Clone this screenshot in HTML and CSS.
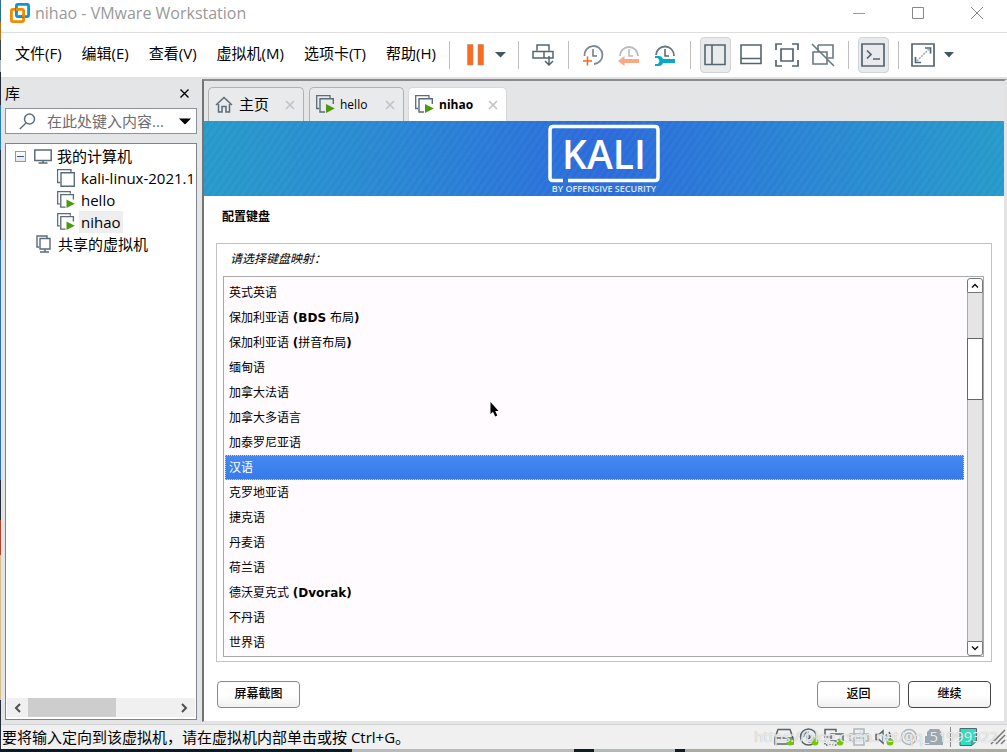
FILE: index.html
```html
<!DOCTYPE html>
<html lang="zh-CN">
<head>
<meta charset="utf-8">
<title>nihao - VMware Workstation</title>
<link rel="stylesheet" href="styles.css">
</head>
<body>
<svg class="defs" aria-hidden="true">
  <symbol id="vm" viewBox="0 0 18 18"><path d="M3 13.500H.5V.5H14V3" fill="none" stroke="#5b6b78" stroke-width="1.300"/><path d="M4 3.800H17.300V17.200H4Z" fill="#fff" stroke="#5b6b78" stroke-width="1.400"/></symbol>
  <symbol id="vm-on" viewBox="0 0 19 19"><path d="M3 13.500H.7V.7H14V3" fill="none" stroke="#5b6b78" stroke-width="1.300"/><path d="M9 17H4V3.800H17.300V9" fill="none" stroke="#5b6b78" stroke-width="1.400"/><path d="M10 9 18.800 13.500 10 18Z" fill="#4a9a0c"/></symbol>
  <symbol id="close" viewBox="0 0 10 10"><path d="M1 1 9 9M9 1 1 9" fill="none" stroke="currentColor" stroke-width="1.700"/></symbol>
  <symbol id="clock" viewBox="0 0 22 22"><path d="M11 5V12H15" fill="none" stroke="currentColor" stroke-width="1.500"/></symbol>
</svg>
<div class="desktop">
<div class="window">
  <header class="titlebar">
    <svg class="logo" width="20" height="20" viewBox="0 0 20 20"><rect x="6.400" y="1.400" width="12.200" height="12.200" rx="1.500" fill="none" stroke="#0c95d3" stroke-width="2.800"/><rect x="1.400" y="6.400" width="12.200" height="12.200" rx="1.500" fill="none" stroke="#f38b00" stroke-width="2.800"/><path d="M6.400 10V5M9 13.600h5" stroke="#0c95d3" stroke-width="2.800"/><path d="M6 6.400h3M13.600 11v3" stroke="#f38b00" stroke-width="2.800"/></svg>
    <h1 class="window-title">nihao - VMware Workstation</h1>
    <div class="window-buttons">
      <button class="window-button" aria-label="最小化"><svg width="12" height="12"><path d="M0 6.500H12" stroke="#999"/></svg></button>
      <button class="window-button" aria-label="最大化"><svg width="12" height="12"><path d="M.5.5H11.500V11.500H.5Z" fill="none" stroke="#888"/></svg></button>
      <button class="window-button" aria-label="关闭"><svg width="12" height="12"><path d="M0 0 12 12M12 0 0 12" stroke="#888"/></svg></button>
    </div>
  </header>

  <div class="menubar">
    <nav class="menu">
      <button class="menu-item">文件(F)</button><button class="menu-item">编辑(E)</button><button class="menu-item">查看(V)</button><button class="menu-item">虚拟机(M)</button><button class="menu-item">选项卡(T)</button><button class="menu-item">帮助(H)</button>
    </nav>
    <div class="toolbar">
      <span class="separator"></span>
      <button class="tool tool-split" aria-label="挂起"><svg width="18" height="22"><path d="M.5.5h5.500v20.500h-5.500zM11 .5h5.500v20.500h-5.500z" fill="#fb6b1d" stroke="#b98a72" stroke-width=".6"/></svg><svg width="11" height="6"><path d="M0 0H11L5.500 5.500Z" fill="#405766"/></svg></button>
      <span class="separator"></span>
      <button class="tool" aria-label="发送按键"><svg width="22" height="22" viewBox="0 0 22 22" fill="none" stroke="#54656f" stroke-width="1.500"><path d="M5 6.500V1H17V6.500M1 7.500H21V14H1ZM12 7.500V14M17 12V20M13 17l4 4 4-4"/></svg></button>
      <span class="separator"></span>
      <button class="tool" aria-label="拍摄快照"><svg width="22" height="22" viewBox="0 0 22 22" fill="none" color="#687782"><path d="M2.500 12A9 9 0 1 1 12 20" stroke="#7c8993" stroke-width="1.800"/><use href="#clock"/><path d="M5.500 12.500v9M1 17h9" stroke="#f26a2a" stroke-width="1.600"/></svg></button>
      <button class="tool" aria-label="恢复快照"><svg width="22" height="22" viewBox="0 0 22 22" fill="none" color="#b4bbc1"><path d="M2 12A9 9 0 1 1 20 12" stroke="#b4bbc1" stroke-width="1.800"/><use href="#clock"/><path d="M0 17 6.500 12V15H21V19H6.500V22Z" fill="#fba984"/></svg></button>
      <button class="tool" aria-label="管理快照"><svg width="22" height="22" viewBox="0 0 22 22" fill="none" color="#54656f"><path d="M2 11A9 9 0 1 1 20 12" stroke="#687782" stroke-width="1.800"/><use href="#clock"/><path d="M1 12h4q3 0 4 3h12v4H9q-1 3-4 3H1v-2h3l1.500-3L4 14H1Z" fill="#05aacb"/></svg></button>
      <span class="separator"></span>
      <button class="tool tool-active" aria-label="显示库"><svg width="22" height="22" fill="none" stroke="#54656f" stroke-width="1.600"><path d="M1 1H21V20.500H1ZM8 1V20.500"/></svg></button>
      <button class="tool" aria-label="缩略图栏"><svg width="22" height="22" fill="none" stroke="#54656f" stroke-width="1.600"><path d="M1 1H21V19.500H1ZM1 14.500H21"/></svg></button>
      <button class="tool" aria-label="全屏"><svg width="24" height="24" fill="none" stroke="#54656f" stroke-width="1.700"><path d="M1 7V1H7M17 1h6v6M23 17v6h-6M7 23H1v-6M6 6H18V18H6Z"/></svg></button>
      <button class="tool" aria-label="Unity 模式"><svg width="24" height="24" fill="none" stroke="#6a7882" stroke-width="1.600"><path d="M7 2H22V15H17M7 9V2M2 9H16V21H2ZM1 1 23 23"/></svg></button>
      <span class="separator"></span>
      <button class="tool tool-active" aria-label="控制台视图"><svg width="24" height="24" fill="none" stroke="#54656f" stroke-width="1.700"><path d="M1 1H23V23H1Z"/><path d="M6 7.500 10 11.500 6 15.500M12 16h7"/></svg></button>
      <span class="separator"></span>
      <button class="tool" aria-label="拉伸客户机"><svg width="24" height="24" fill="none" stroke="#54656f" stroke-width="1.700"><path d="M1 1H23V23H1Z"/><path d="M14 5h5.500v5.500M4.500 14v5.500H10"/><path d="M6 18 18 6" stroke="#a5adb4" stroke-dasharray="2 1"/></svg></button>
      <button class="tool tool-caret" aria-label="更多"><svg width="10" height="6"><path d="M0 0H10L5 5.500Z" fill="#405766"/></svg></button>
    </div>
  </div>

  <div class="workspace">
    <aside class="library">
      <div class="library-head"><h2 class="library-title">库</h2><button class="plain" aria-label="关闭库"><svg width="9" height="9"><path d="M.5.5 8.500 8.500M8.500.5.5 8.500" stroke="#000" stroke-width="1.400"/></svg></button></div>
      <div class="search">
        <svg width="17" height="17" fill="none" stroke="#5f6f7b" stroke-width="1.500"><circle cx="10.500" cy="6" r="5"/><path d="M7 10 .8 16"/></svg>
        <input class="search-input" type="text" aria-label="搜索" placeholder="在此处键入内容...">
        <button class="plain" aria-label="搜索选项"><svg width="12" height="7"><path d="M0 .5H12L6 6.500Z"/></svg></button>
      </div>
      <div class="tree-box">
        <ul class="tree">
          <li class="tree-row"><button class="expander" aria-label="折叠"></button><svg width="18" height="15" fill="none" stroke="#5b6b78" stroke-width="1.500"><path d="M.8 1H17.200V11.500H.8ZM9 11.500V14M4.500 14h9"/></svg><span class="tree-name">我的计算机</span></li>
          <li class="tree-row tree-child"><svg width="18" height="18"><use href="#vm"/></svg><span class="tree-name">kali-linux-2021.1</span></li>
          <li class="tree-row tree-child"><svg width="18" height="18"><use href="#vm-on"/></svg><span class="tree-name">hello</span></li>
          <li class="tree-row tree-child"><svg width="18" height="18"><use href="#vm-on"/></svg><span class="tree-name tree-selected">nihao</span></li>
          <li class="tree-row tree-shared"><svg width="18" height="18" fill="none" stroke="#5b6b78" stroke-width="1.400"><path d="M4 12H2V1H12V3M5 3.500H15V14H5ZM10 14v3M5 17h9"/></svg><span class="tree-name">共享的虚拟机</span></li>
        </ul>
        <div class="hscroll">
          <button class="plain hscroll-arrow" aria-label="向左"><svg width="7" height="10"><path d="M6 1 2 5 6 9" fill="none" stroke="#505050" stroke-width="2"/></svg></button>
          <div class="hscroll-track"><div class="hscroll-thumb"></div></div>
          <button class="plain hscroll-arrow" aria-label="向右"><svg width="7" height="10"><path d="M1 1 5 5 1 9" fill="none" stroke="#505050" stroke-width="2"/></svg></button>
        </div>
      </div>
    </aside>

    <main class="console">
      <div class="tabs">
        <div class="tab tab-home"><svg width="18" height="17" fill="none" stroke="#5b6b78" stroke-width="1.500"><path d="M1 9 9 1.500 17 9M3.500 8V16H7V10.500h4V16h3.500V8"/></svg><span class="tab-name tab-name-home">主页</span><button class="plain tab-close" aria-label="关闭主页"><svg width="10" height="10"><use href="#close"/></svg></button></div>
        <div class="tab"><svg width="19" height="19"><use href="#vm-on"/></svg><span class="tab-name">hello</span><button class="plain tab-close" aria-label="关闭 hello"><svg width="10" height="10"><use href="#close"/></svg></button></div>
        <div class="tab tab-current"><svg width="19" height="19"><use href="#vm-on"/></svg><span class="tab-name">nihao</span><button class="plain tab-close" aria-label="关闭 nihao"><svg width="10" height="10"><use href="#close"/></svg></button></div>
      </div>
      <section class="guest">
        <div class="banner">
          <svg width="114" height="72" viewBox="0 0 114 72"><path d="M16 58.500H6Q3 58.500 3 55.500V8Q3 4.500 6 4.500H108Q111 4.500 111 8V55.500Q111 58.500 108 58.500H21" fill="none" stroke="#fff" stroke-width="3.500"/><text class="kali-name" x="57" y="47" text-anchor="middle">KALI</text><text class="kali-tag" x="57" y="70" text-anchor="middle">BY OFFENSIVE SECURITY</text></svg>
        </div>
        <div class="installer">
          <h2 class="installer-title">配置键盘</h2>
          <div class="panel">
            <p class="prompt" id="prompt">请选择键盘映射：</p>
            <div class="list">
              <div class="options" role="radiogroup" aria-labelledby="prompt">
                <label class="option"><input type="radio" name="keymap">英式英语</label>
                <label class="option"><input type="radio" name="keymap">保加利亚语 <b>(BDS</b> 布局<b>)</b></label>
                <label class="option"><input type="radio" name="keymap">保加利亚语 <b>(</b>拼音布局<b>)</b></label>
                <label class="option"><input type="radio" name="keymap">缅甸语</label>
                <label class="option"><input type="radio" name="keymap">加拿大法语</label>
                <label class="option"><input type="radio" name="keymap">加拿大多语言</label>
                <label class="option"><input type="radio" name="keymap">加泰罗尼亚语</label>
                <label class="option option-selected"><input type="radio" name="keymap" checked>汉语</label>
                <label class="option"><input type="radio" name="keymap">克罗地亚语</label>
                <label class="option"><input type="radio" name="keymap">捷克语</label>
                <label class="option"><input type="radio" name="keymap">丹麦语</label>
                <label class="option"><input type="radio" name="keymap">荷兰语</label>
                <label class="option"><input type="radio" name="keymap">德沃夏克式 <b>(Dvorak)</b></label>
                <label class="option"><input type="radio" name="keymap">不丹语</label>
                <label class="option"><input type="radio" name="keymap">世界语</label>
              </div>
              <div class="vscroll">
                <button class="vscroll-button vscroll-up" aria-label="向上"><svg width="8" height="5"><path d="M1 4.500 4 1.500 7 4.500" fill="none" stroke="#111" stroke-width="1.500"/></svg></button>
                <div class="vscroll-track"><div class="vscroll-thumb"></div></div>
                <button class="vscroll-button vscroll-down" aria-label="向下"><svg width="8" height="5"><path d="M1 .5 4 3.500 7 .5" fill="none" stroke="#111" stroke-width="1.500"/></svg></button>
              </div>
            </div>
          </div>
          <div class="actions">
            <button class="action action-left">屏幕截图</button>
            <button class="action">返回</button>
            <button class="action action-default">继续</button>
          </div>
        </div>
        <svg class="pointer" width="10" height="16" viewBox="0 0 10 16"><path d="M.5 0V12L3 9.800 5.200 14.500 7.300 13.500 5.200 9H8.500Z"/></svg>
      </section>
    </main>
  </div>

  <footer class="statusbar">
    <p class="status-text">要将输入定向到该虚拟机，请在虚拟机内部单击或按 Ctrl+G。</p>
    <div class="devices">
      <svg width="20" height="18" fill="none" stroke="#54656f" stroke-width="1.500"><path d="M4 1.500H16L19 10V16H1V10ZM1 10H19"/><circle cx="16" cy="14" r="3.500" fill="#76c510" stroke="none"/></svg>
      <svg width="20" height="18" fill="none" stroke="#54656f" stroke-width="1.500"><circle cx="9.500" cy="9" r="8"/><circle cx="9.500" cy="9" r="1.500"/><path d="M4.500 9a5 5 0 0 1 5-5M14.500 9a5 5 0 0 1-5 5"/><circle cx="16" cy="14" r="3.500" fill="#76c510" stroke="none"/></svg>
      <svg width="20" height="18" fill="none" stroke="#54656f" stroke-width="1.500"><path d="M6 9H1V1.500H12V4M7 6H19V13H7Z"/><path d="M1 12v5H14" stroke-dasharray="1.500 1.500"/><circle cx="16" cy="14" r="3.500" fill="#76c510" stroke="none"/></svg>
      <svg width="20" height="18" fill="none" stroke="#adb5bb" stroke-width="1.500"><path d="M5 6V1H15V6M5 13H1V6H19V13H15M5 10H15V17H5Z"/></svg>
      <svg width="20" height="18" fill="none" stroke="#54656f" stroke-width="1.500"><path d="M2 6.500H5L9 3V15L5 11.500H2Z"/><path d="M12 6.500q2 2.500 0 5M15 4q3 5 0 9"/><circle cx="16" cy="14" r="3.500" fill="#76c510" stroke="none"/></svg>
      <svg width="20" height="18" fill="none" stroke="#adb5bb" stroke-width="1.500"><circle cx="10" cy="9" r="7.500"/><circle cx="10" cy="9" r="4"/><path d="M10 7v4"/></svg>
      <svg width="20" height="18" fill="#9aa8b2"><path d="M1 8V17H19V8ZM3 8V4L6 1H15L17 4V8Z"/></svg>
      <span class="status-separator"></span>
      <svg width="20" height="18"><path d="M2 .5H18.500V13L14 17.500H2Z" fill="#2ce0c2" stroke="#54656f"/><path d="M14 17V13H18" fill="none" stroke="#54656f"/></svg>
      <svg class="grip" width="16" height="16" fill="none" stroke="#777" stroke-width="1.500"><path d="M1 15 15 1M6 15 15 6M11 15l4-4"/></svg>
    </div>
    <span class="watermark">https://blog.csdn.net/qq_51999322</span>
  </footer>
</div>
</div>
</body>
</html>
```
FILE: styles.css
```css
* { box-sizing: border-box; }
body { margin: 0; font: 15px/22px "Open Sans", "Noto Sans CJK SC", sans-serif; color: #000; }
h1, h2, p, ul { margin: 0; padding: 0; font-weight: 400; }
ul { list-style: none; }
svg { flex: none; display: block; }
button { font: inherit; color: inherit; border: 0; background: none; padding: 0; margin: 0; }
.defs { position: absolute; width: 0; height: 0; }
.plain { display: flex; align-items: center; justify-content: center; }

.desktop {
  min-height: 100vh; display: flex; padding: 0 0 3px 1px;
  background:
    linear-gradient(90deg, #0b1a25 0 35%, #b9bbba 35% 57%, #101c22 57% 59%, #b5b8b8 59% 67%, #101c22 67% 68%, #a9aaa4 68%) bottom / 100% 3px no-repeat,
    linear-gradient(#27718f 0 22px, #b87224 22px 40px, #3a4552 40px 60px, #b5bac0 60px 72px, #252d3b 72px 105px, #2b7fb8 105px 150px, #253350 150px 240px, #2f70ad 240px 480px, #252d3b 480px 520px, #b8402e 520px 555px, #d6c184 555px 700px, #252d3b 700px);
}
.window { flex: 1; min-width: 0; display: flex; flex-direction: column; background: #fff; }

.titlebar { display: flex; align-items: center; height: 33px; padding: 0 24px 6px 9px; border-bottom: 1px solid #dedede; }
.window-title { font-size: 16px; line-height: 22px; color: #999; margin-left: 5px; }
.window-buttons { display: flex; gap: 47px; margin-left: auto; }
.window-button { display: flex; }

.menubar { display: flex; align-items: center; height: 44px; }
.menu { display: flex; gap: 20px; padding: 0 0 4px 14px; }
.menu-item { white-space: nowrap; }
.toolbar { display: flex; align-items: center; gap: 5px; margin-left: 9px; }
.separator { width: 1px; height: 28px; margin: 0 4px; background: #bfbfbf; }
.tool { width: 31px; height: 36px; display: flex; align-items: center; justify-content: center; border: 1px solid transparent; border-radius: 4px; }
.tool-active { background: #e9eaec; border-color: #d2d3d4; }
.tool-split { width: 50px; gap: 10px; padding-left: 5px; }
.tool-caret { width: 10px; }

.workspace { flex: 1; display: flex; background: #e4e5e7; border-top: 2px solid #e2e2e2; }
.library { width: 201px; flex: none; display: flex; flex-direction: column; padding: 2px 5px 4px 4px; }
.library-head { display: flex; align-items: center; justify-content: space-between; height: 27px; padding: 0 8px 3px 0; }
.library-title { font-size: 15px; }
.search { display: flex; align-items: center; height: 26px; padding: 0 5px 0 13px; background: #fff; border: 1px solid #8c9099; }
.search-input { flex: 1; min-width: 0; border: 0; padding: 0; margin-left: 11px; font: inherit; background: none; outline: 0; }
.search-input::placeholder { color: #6d6d6d; opacity: 1; }
.tree-box { flex: 1; display: flex; flex-direction: column; justify-content: space-between; margin-top: 9px; padding: 1px 1px 2px; background: #fff; border: 1px solid #7e838c; }
.tree-row { display: flex; align-items: center; height: 22px; padding-left: 8px; white-space: nowrap; }
.tree-child { padding-left: 50px; }
.tree-shared { padding-left: 28px; }
.tree-name { margin-left: 3px; padding: 0 2px; }
.tree-child .tree-name { margin-left: 4px; }
.tree-selected { background: #eee; }
.expander { width: 11px; height: 11px; margin-right: 8px; border: 1px solid #999; background: linear-gradient(#3856a5, #3856a5) center / 7px 1px no-repeat, linear-gradient(#fff, #e6e6e6); }
.hscroll { display: flex; height: 19px; background: #f0f0f0; }
.hscroll-arrow { width: 21px; }
.hscroll-track { flex: 1; }
.hscroll-thumb { width: 60%; height: 100%; background: #cdcdcd; }

.console { flex: 1; min-width: 0; display: flex; flex-direction: column; border: 2px solid #e3e3e3; border-top-color: #8b8b8b; border-left-color: #747474; border-right-width: 3px; border-bottom-width: 1px; margin-bottom: 2px; }
.tabs { display: flex; gap: 5px; padding: 6px 3px 0 4px; }
.tab { display: flex; align-items: center; height: 34px; width: 95px; padding: 0 8px 0 6px; font-size: 13px; border: 1px solid #b0b1b3; border-bottom: 0; border-radius: 5px 5px 0 0; background: #e9eaec; }
.tab-home { width: 96px; }
.tab-current { width: 99px; margin-left: -1px; background: #fff; font-weight: 700; border-color: #d8d8d8; }
.tab-name { margin-left: 5px; font-size: 12px; }
.tab-name-home { font-size: 15px; margin-left: 6px; padding-bottom: 2px; }
.tab-close { margin-left: auto; color: #c3c4c6; }

.guest { position: relative; flex: 1; display: flex; flex-direction: column; background: #fff; font: 12px/25px "DejaVu Sans", "Noto Sans CJK SC", sans-serif; }
.banner {
  display: flex; justify-content: center; height: 75px; padding-top: 1px;
  background:
    repeating-linear-gradient(125deg, rgba(255,255,255,.025) 0 3px, rgba(0,30,90,.015) 3px 6px),
    linear-gradient(90deg, #279bcb, #2a8bd2 20%, #2b75da 42%, #2d6bdb 50%, #2b75da 58%, #2a8bd2 80%, #279bcb);
}
.kali-name { font: 600 39px "Open Sans", sans-serif; fill: #fff; }
.kali-tag { font: 600 9px "Open Sans", sans-serif; fill: #dce9fb; }
.installer { flex: 1; display: flex; flex-direction: column; padding: 9px 12px 13px; }
.installer-title { font-size: 12px; font-weight: 700; line-height: 25px; padding-left: 6px; }
.panel { flex: 1; margin-top: 13px; padding: 3px 7px 4px 6px; border: 1px solid #c2c2c2; display: flex; flex-direction: column; }
.prompt { font-style: italic; padding: 0 7px 4px; }
.list { flex: 1; display: flex; justify-content: space-between; border: 1px solid #aaa; background: #fffbff; }
.options { flex: 1; padding: 3px 3px 0 1px; }
.option { display: block; height: 25px; line-height: 27px; padding: 0 4px; }
.option input { position: absolute; opacity: 0; margin: 0; }
.option-selected { padding: 0 3px; line-height: 25px; color: #fff; background: linear-gradient(#4788f1, #357bea); border: 1px dotted #b5d0fa; }
.vscroll { width: 16px; display: flex; flex-direction: column; padding-top: 1px; background: #fff; }
.vscroll-button { height: 15px; display: flex; align-items: center; justify-content: center; border: 1px solid #777; background: #fff; }
.vscroll-up { border-radius: 3px 3px 0 0; }
.vscroll-down { border-radius: 0 0 3px 3px; }
.vscroll-track { flex: 1; padding-top: 45px; background: #e5e5e5; border: solid #aaa; border-width: 0 1px; margin: 0; }
.vscroll-thumb { height: 62px; margin: 0 -1px; border: 1px solid #666; background: #fff; }
.actions { display: flex; gap: 8px; margin-top: 19px; padding: 0 1px; }
.action { width: 83px; height: 27px; border: 1px solid #888; border-radius: 4px; background: linear-gradient(#fff 50%, #f2f0f2); font-weight: 500; }
.action-left { margin-right: auto; }
.action-default { border-color: #444; }
.pointer { position: absolute; left: 286px; top: 281px; }

.statusbar { position: relative; display: flex; align-items: center; justify-content: space-between; height: 25px; padding: 0 1px 1px; background: #f0f0f0; border-top: 1px solid #d2d2d2; }
.status-text { white-space: nowrap; }
.devices { display: flex; align-items: center; gap: 5px; }
.status-separator { width: 1px; height: 20px; margin: 0 2px 0 1px; background: #888; }
.grip { margin-left: 7px; }
.watermark { position: absolute; right: 9px; top: 0; font-size: 15px; color: rgba(255,255,255,.8); text-shadow: 0 0 1px #999; }
```
